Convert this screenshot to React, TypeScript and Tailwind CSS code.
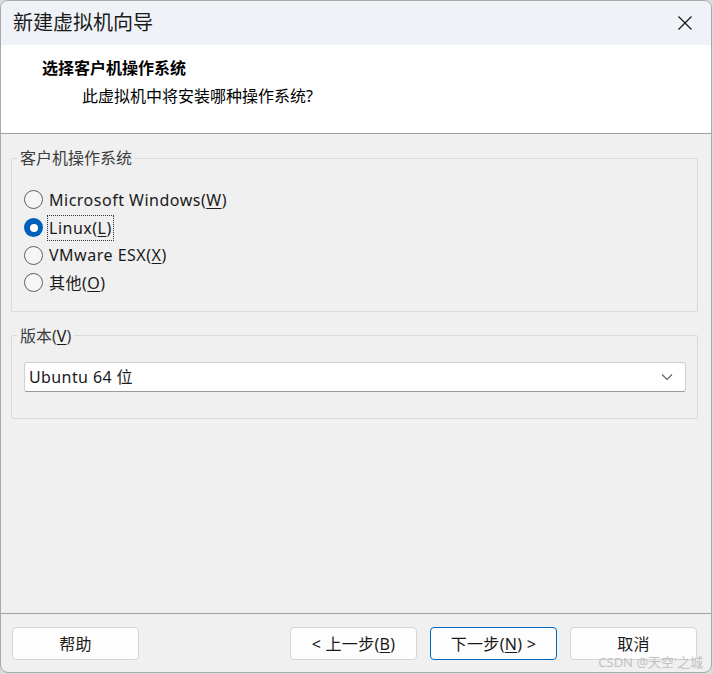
import React from "react";

const sans = "font-['Segoe_UI','Noto_Sans','Noto_Sans_CJK_SC',sans-serif]";

type Option = { label: string; key: string; checked?: boolean };

const options: Option[] = [
  { label: "Microsoft Windows", key: "W" },
  { label: "Linux", key: "L", checked: true },
  { label: "VMware ESX", key: "X" },
  { label: "其他", key: "O" },
];

function Radio({ checked }: { checked?: boolean }) {
  if (checked) {
    return (
      <span className="flex h-[19px] w-[19px] items-center justify-center rounded-full bg-[#005fb8]">
        <span className="h-[8px] w-[8px] rounded-full bg-white" />
      </span>
    );
  }
  return <span className="h-[19px] w-[19px] rounded-full border border-[#5f5f5f] bg-[#f6f6f6]" />;
}

function Mnemonic({ text, k }: { text: string; k: string }) {
  return (
    <>
      {text}(<u className="underline-offset-2">{k}</u>)
    </>
  );
}

function Btn({ children, primary }: { children: React.ReactNode; primary?: boolean }) {
  return (
    <button
      className={
        primary
          ? "flex h-[33px] w-[127px] items-center justify-center rounded-[4px] border border-[#0067c0] bg-[#fdfdfd] text-[16px] tracking-[0.3px] text-[#1a1a1a]"
          : "flex h-[33px] w-[127px] items-center justify-center rounded-[4px] border border-[#d5d5d5] bg-[#fdfdfd] text-[16px] tracking-[0.3px] text-[#1a1a1a]"
      }
    >
      {children}
    </button>
  );
}

export default function App() {
  return (
    <div className={`h-[674px] w-[713px] bg-[#dcdcdc] ${sans}`}>
      <div className="relative flex h-[673px] w-[712px] flex-col overflow-hidden rounded-[8px] border border-[#a9a9a9] bg-[#f0f0f0]">
        {/* title bar */}
        <div className="flex h-[44px] items-center justify-between bg-[#eff3f8] pl-[12px] pr-[18px]">
          <span className="text-[20px] text-[#1a1a1a]">新建虚拟机向导</span>
          <svg width="16" height="16" viewBox="0 0 16 16" className="text-[#1a1a1a]">
            <path d="M1.5 1.5 L14.5 14.5 M14.5 1.5 L1.5 14.5" stroke="currentColor" strokeWidth="1.3" fill="none" />
          </svg>
        </div>

        {/* header */}
        <div className="h-[89px] border-b border-[#a0a0a0] bg-white pt-[12px]">
          <p className="pl-[41px] text-[16px] font-bold leading-[22px] text-black">选择客户机操作系统</p>
          <p className="mt-[6px] pl-[81px] text-[16px] leading-[22px] text-black">此虚拟机中将安装哪种操作系统?</p>
        </div>

        {/* body */}
        <div className="flex flex-1 flex-col pl-[10px] pr-[13px] pt-[13px]">
          <fieldset className="rounded-[2px] border border-[#dadada]">
            <legend className="ml-[5px] px-[3px] text-[16px] leading-[22px] text-[#3c3c3c]">客户机操作系统</legend>
            <div className="flex flex-col pb-[14px] pl-[12px] pt-[17px]">
              {options.map((o) => (
                <div
                  key={o.key}
                  className="flex h-[27.7px] items-center gap-[4px] text-[16px] tracking-[0.5px] text-[#1a1a1a]"
                >
                  <Radio checked={o.checked} />
                  <span
                    className={
                      o.checked
                        ? "border border-dotted border-[#333] px-[1px] leading-[24px]"
                        : "border border-transparent px-[1px] leading-[24px]"
                    }
                  >
                    <Mnemonic text={o.label} k={o.key} />
                  </span>
                </div>
              ))}
            </div>
          </fieldset>

          <fieldset className="mt-[13px] rounded-[2px] border border-[#dadada]">
            <legend className="ml-[5px] px-[3px] text-[16px] leading-[22px] text-[#3c3c3c]">
              版本(<u className="text-[#1a1a1a] underline-offset-2">V</u>)
            </legend>
            <div className="pb-[26px] pl-[12px] pr-[11px] pt-[15px]">
              <div className="flex h-[30px] items-center justify-between rounded-[3px] border border-[#d0d0d0] border-b-[#9a9a9a] bg-white pl-[4px] pr-[12px]">
                <span className="text-[16px] tracking-[0.4px] text-[#1a1a1a]">Ubuntu 64 位</span>
                <svg width="12" height="8" viewBox="0 0 12 8" className="text-[#606060]">
                  <path d="M1 1.5 L6 6.5 L11 1.5" stroke="currentColor" strokeWidth="1.1" fill="none" />
                </svg>
              </div>
            </div>
          </fieldset>
        </div>

        {/* footer */}
        <div className="flex h-[59px] items-start border-t border-[#a0a0a0] pl-[11px] pr-[14px] pt-[13px]">
          <Btn>帮助</Btn>
          <div className="ml-auto flex gap-[13px]">
            <Btn>&lt; 上一步(<u className="underline-offset-2">B</u>)</Btn>
            <Btn primary>
              下一步(<u className="underline-offset-2">N</u>) &gt;
            </Btn>
            <Btn>取消</Btn>
          </div>
        </div>

        <span className="absolute bottom-[2px] right-[8px] text-[13px] leading-[15px] text-[#c2c2c2]">CSDN @天空'之城</span>
      </div>
    </div>
  );
}
